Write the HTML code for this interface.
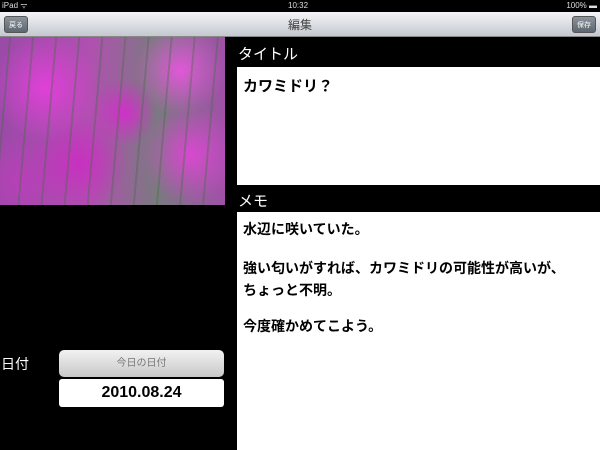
<!DOCTYPE html>
<html><head><meta charset="utf-8"><style>
*{margin:0;padding:0;box-sizing:border-box}
body{width:600px;height:450px;background:#000;position:relative;overflow:hidden;font-family:"Liberation Sans","Noto Sans CJK JP",sans-serif}
.abs{position:absolute}
#status{left:0;top:0;width:600px;height:12px;background:#000;color:#ddd;font-size:8px;line-height:12px}
#nav{left:0;top:12px;width:600px;height:25px;background:linear-gradient(#f4f5f7,#c4c8cf);border-bottom:1px solid #888}
.btn{top:4px;height:17px;border-radius:3px;background:linear-gradient(#8a939c,#5e6670);color:#fff;font-size:7px;line-height:17px;text-align:center;border:1px solid #555}
#photo{left:0;top:37px;width:225px;height:168px;background:
repeating-linear-gradient(95deg,transparent 0 9px,rgba(60,110,60,.35) 9px 11px,transparent 11px 23px),
radial-gradient(circle at 20% 30%,#e040d8 0,transparent 25%),
radial-gradient(circle at 55% 45%,#d030c8 0,transparent 22%),
radial-gradient(circle at 80% 20%,#e058d8 0,transparent 20%),
radial-gradient(circle at 35% 75%,#c830c0 0,transparent 25%),
radial-gradient(circle at 85% 70%,#d848d0 0,transparent 22%),
radial-gradient(circle at 10% 85%,#b840b8 0,transparent 20%),
linear-gradient(90deg,#9a4aa8,#b050b0 40%,#7a7a80 70%,#a050a8);}
.lbl{color:#fff;font-size:15px}
.box{background:#fff;color:#000;font-weight:bold;font-size:14px}
</style></head><body>
<div id="status" class="abs"><span style="position:absolute;left:2px">iPad ᯤ</span><span style="position:absolute;left:288px">10:32</span><span style="position:absolute;right:3px">100% ▬</span></div>
<div id="nav" class="abs">
<div class="btn abs" style="left:4px;width:24px">戻る</div>
<div class="abs" style="left:0;width:600px;text-align:center;top:4px;font-size:12px;color:#444">編集</div>
<div class="btn abs" style="right:4px;width:24px">保存</div>
</div>
<div id="photo" class="abs"></div>
<div class="abs lbl" style="left:238px;top:43px">タイトル</div>
<div class="abs box" style="left:237px;top:67px;width:363px;height:118px;padding:8px 6px;font-size:15px">カワミドリ？</div>
<div class="abs lbl" style="left:238px;top:190px">メモ</div>
<div class="abs box" style="left:237px;top:212px;width:363px;height:238px;padding:6px 6px;line-height:22px">水辺に咲いていた。<div style="height:17px"></div>強い匂いがすれば、カワミドリの可能性が高いが、<br>ちょっと不明。<div style="height:14px"></div>今度確かめてこよう。</div>
<div class="abs lbl" style="left:1px;top:354px;font-size:14px">日付</div>
<div class="abs" style="left:59px;top:350px;width:165px;height:27px;border-radius:5px;background:linear-gradient(#f2f2f2,#c8c8c8);color:#777;font-size:10px;text-align:center;line-height:27px">今日の日付</div>
<div class="abs" style="left:59px;top:379px;width:165px;height:28px;border-radius:3px;background:#fff;color:#000;font-weight:bold;font-size:16px;text-align:center;line-height:28px">2010.08.24</div>
</body></html>
